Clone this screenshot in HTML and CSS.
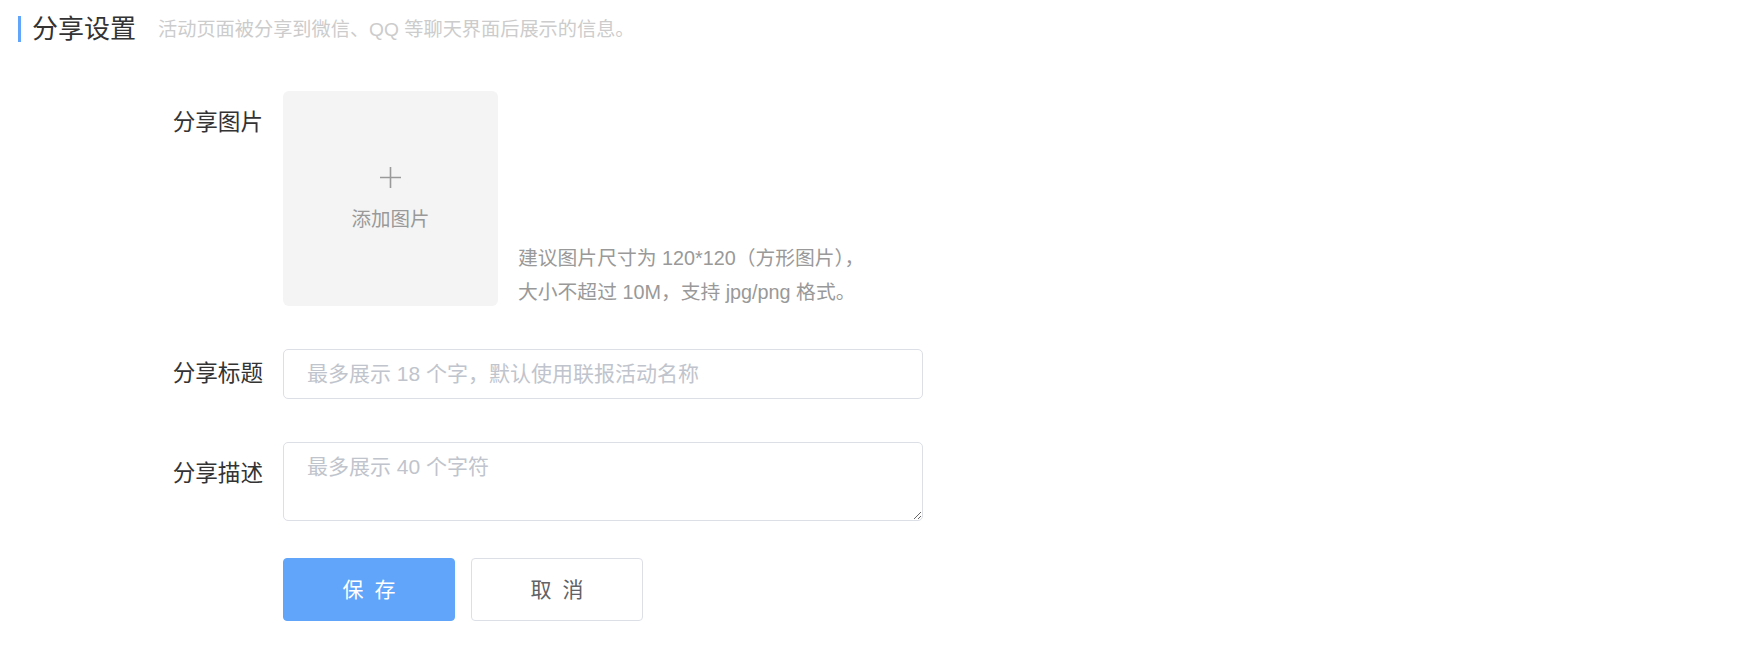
FILE: index.html
```html
<!DOCTYPE html>
<html lang="zh-CN">
<head>
  <meta charset="UTF-8" />
  <meta name="viewport" content="width=device-width, initial-scale=1.0"/>
  <title>分享设置</title>
  <link rel="stylesheet" href="styles.css">
</head>
<body>

  <div class="section-head">
    <span class="section-bar"></span>
    <h2 class="section-title">分享设置</h2>
    <span class="section-desc">活动页面被分享到微信、QQ 等聊天界面后展示的信息。</span>
  </div>

  <div class="form">
    <!-- 分享图片 -->
    <div class="form-item">
      <label class="form-label form-label--top">分享图片</label>
      <div class="upload-box">
        <svg class="upload-plus" width="21" height="21" viewBox="0 0 21 21">
          <path d="M10.5 0v21M0 10.5h21" stroke="#9a9a9a" stroke-width="1.6" fill="none"/>
        </svg>
        <span class="upload-text">添加图片</span>
      </div>
      <div class="upload-tip">
        建议图片尺寸为 120*120（方形图片），<br>
        大小不超过 10M，支持 jpg/png 格式。
      </div>
    </div>

    <!-- 分享标题 -->
    <div class="form-item form-item--center">
      <label class="form-label" for="shareTitle">分享标题</label>
      <input class="form-input" type="text" id="shareTitle" placeholder="最多展示 18 个字，默认使用联报活动名称" />
    </div>

    <!-- 分享描述 -->
    <div class="form-item">
      <label class="form-label form-label--top" for="shareDesc">分享描述</label>
      <textarea class="form-textarea" id="shareDesc" placeholder="最多展示 40 个字符"></textarea>
    </div>

    <div class="form-actions">
      <button class="btn btn-primary">保存</button>
      <button class="btn btn-default">取消</button>
    </div>
  </div>

</body>
</html>
```

FILE: styles.css
```css
:root {
  --primary: #60a5fa;
  --text: #303133;
  --muted: #999999;
  --placeholder: #c0c4cc;
  --border: #dcdfe6;
}

body {
  margin: 0;
  font-family: 'Liberation Sans', 'Noto Sans CJK SC', sans-serif;
  color: var(--text);
  background: #ffffff;
}

.section-head {
  display: flex;
  align-items: center;
  height: 26px;
  padding: 16px 0 0 18px;
}

.section-bar {
  width: 3px;
  height: 26px;
  background-color: var(--primary);
  margin-right: 11px;
}

.section-title {
  margin: 0;
  font-size: 26px;
  font-weight: normal;
  line-height: 26px;
  color: #333333;
}

.section-desc {
  margin-left: 22px;
  font-size: 19.2px;
  line-height: 26px;
  padding-top: 2px;
  color: #cccccc;
}

.form {
  margin-top: 49px;
  padding-left: 141px;
}

.form-item {
  display: flex;
  align-items: flex-start;
  margin-bottom: 43px;
}

.form-item--center {
  align-items: center;
}

.form-label {
  width: 122px;
  margin-right: 20px;
  text-align: right;
  font-size: 22.6px;
  line-height: 50px;
  color: #333333;
}

.form-label--top {
  padding-top: 7px;
}

.upload-box {
  width: 215px;
  height: 215px;
  border-radius: 6px;
  background-color: #f4f4f4;
  display: flex;
  flex-direction: column;
  align-items: center;
  justify-content: center;
  gap: 19px;
  cursor: pointer;
}

.upload-plus {
  display: block;
}

.upload-text {
  font-size: 19.5px;
  line-height: 24px;
  color: var(--muted);
}

.upload-tip {
  align-self: flex-end;
  margin-left: 20px;
  margin-bottom: -3px;
  font-size: 19.8px;
  line-height: 34px;
  color: var(--muted);
}

.form-input,
.form-textarea {
  box-sizing: border-box;
  width: 640px;
  border: 1px solid var(--border);
  border-radius: 5px;
  font-family: inherit;
  font-size: 21px;
  color: var(--text);
  outline: none;
  margin: 0;
}

.form-input {
  height: 50px;
  padding: 0 23px;
}

.form-textarea {
  display: block;
  height: 79px;
  padding: 10px 23px;
  line-height: 28px;
}

.form-input::placeholder,
.form-textarea::placeholder {
  color: var(--placeholder);
}

.form-actions {
  display: flex;
  gap: 16px;
  margin-top: -6px;
  padding-left: 142px;
}

.btn {
  width: 172px;
  height: 63px;
  border-radius: 4px;
  font-family: inherit;
  font-size: 21px;
  letter-spacing: 11px;
  padding: 0 0 3px 11px;
  cursor: pointer;
}

.btn-primary {
  background-color: var(--primary);
  border: 1px solid var(--primary);
  color: #ffffff;
}

.btn-default {
  background-color: #ffffff;
  border: 1px solid var(--border);
  color: #606266;
}
```
